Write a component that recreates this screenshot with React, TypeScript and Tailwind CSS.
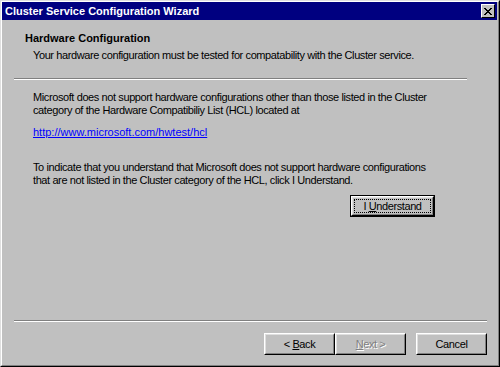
import React from 'react';

function Btn({ children, className = '', disabled = false, focus = false }: { children: React.ReactNode; className?: string; disabled?: boolean; focus?: boolean }) {
  return (
    <div className={"border border-t-white border-l-white border-r-black border-b-black " + className}>
      <div className="h-full border border-t-[#dfdfdf] border-l-[#dfdfdf] border-r-[#808080] border-b-[#808080] flex items-stretch p-px">
        <div className={"flex-1 flex items-center justify-center whitespace-nowrap tracking-[-0.4px] border border-dotted " + (focus ? "border-black" : "border-transparent")}>
          <span className={disabled ? "text-[#808080] [text-shadow:1px_1px_0_#fff]" : "text-black"}>{children}</span>
        </div>
      </div>
    </div>
  );
}

export default function App() {
  return (
    <div className="w-[500px] h-[367px] bg-[#c0c0c0] border border-t-[#dfdfdf] border-l-[#dfdfdf] border-r-black border-b-black font-['Liberation_Sans',Arial,sans-serif] text-[11px] leading-[13px] text-black">
      <div className="h-full border border-t-white border-l-white border-r-[#808080] border-b-[#808080] flex flex-col">
        <div className="h-[18px] mr-px bg-[#000080] flex items-center justify-between pl-[3px] pr-[2px]">
          <span className="text-white font-bold">Cluster Service Configuration Wizard</span>
          <div className="w-[14px] h-[14px] border border-t-white border-l-white border-r-black border-b-black bg-[#c0c0c0] flex items-center justify-center">
            <svg width="8" height="7" viewBox="0 0 8 7">
              <path d="M0 0h2v1h1v1h2V1h1V0h2v1H7v1H6v1H5v1h1v1h1v1h1v1H6V6H5V5H3v1H2v1H0V6h1V5h1V4h1V3H2V2H1V1H0z" fill="#000" />
            </svg>
          </div>
        </div>

        <div className="pt-[12px] pl-[23px] font-bold">Hardware Configuration</div>
        <div className="mt-[4px] pl-[31px] tracking-[-0.4px] whitespace-nowrap">Your hardware configuration must be tested for compatability with the Cluster service.</div>
        <div className="mt-[16px] ml-[12px] w-[453px]">
          <div className="h-px bg-[#808080]" />
          <div className="h-px bg-white" />
        </div>

        <div className="pl-[31px] mt-[11px] tracking-[-0.4px] whitespace-nowrap">
          <p>Microsoft does not support hardware configurations other than those listed in the Cluster<br />category of the Hardware Compatibiliy List (HCL) located at</p>
          <p className="mt-[9px]"><span className="text-[#0000ff] underline tracking-[0px]">http://www.microsoft.com/hwtest/hcl</span></p>
          <p className="mt-[22px]">To indicate that you understand that Microsoft does not support hardware configurations<br />that are not listed in the Cluster category of the HCL, click I Understand.</p>
        </div>

        <div className="mt-[8px] ml-[348px] w-[85px] h-[22px] border border-black">
          <Btn className="h-full" focus>I <u>U</u>nderstand</Btn>
        </div>

        <div className="flex-1" />
        <div className="ml-[12px] w-[473px]">
          <div className="h-px bg-[#808080]" />
          <div className="h-px bg-white" />
        </div>
        <div className="mt-[11px] mb-[10px] pl-[262px] flex">
          <Btn className="w-[71px] h-[22px]">&lt; <u>B</u>ack</Btn>
          <Btn className="w-[71px] h-[22px]" disabled><u>N</u>ext &gt;</Btn>
          <Btn className="w-[71px] h-[22px] ml-[10px]">Cancel</Btn>
        </div>
      </div>
    </div>
  );
}
